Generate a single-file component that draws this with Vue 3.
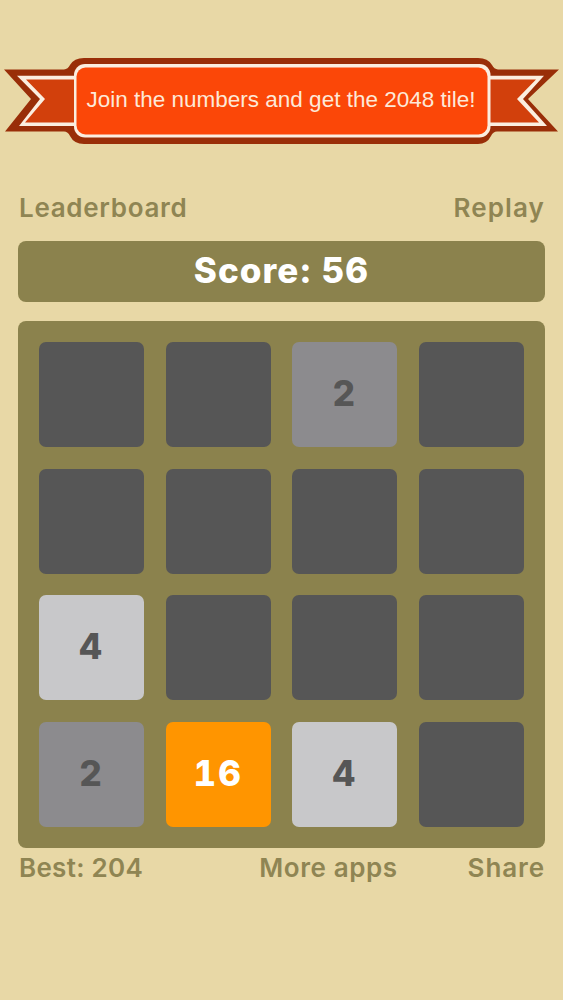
<script setup>
const rows = [
  [0, 0, 2, 0],
  [0, 0, 0, 0],
  [4, 0, 0, 0],
  [2, 16, 4, 0],
]
const tiles = rows.flat()
</script>

<template>
  <div class="page">
    <div class="banner">
      <svg class="ribbon" viewBox="0 0 563 86" width="563" height="86" aria-hidden="true">
        <g transform="translate(0 -58)">
          <path d="M4 69.500H64Q68 69 70 65Q74 58 84 58H478Q488 58 492 65Q494 69 498 69.500H559L528 99L558 131.500H497Q493 131.500 491 136Q487 144 478 144H84Q74 144 70 136Q68 131.500 64 131.500H5L31 99Z" fill="#992e08"/>
          <path d="M17 75.700H80V126H19L40 99Z" fill="#fbeee0"/>
          <path d="M544 75.700H480V126H547L523 99Z" fill="#fbeee0"/>
          <path d="M26 79.500H80V122.500H25L45 99Z" fill="#d2400c"/>
          <path d="M536 79.500H480V122.500H539L517 99Z" fill="#d2400c"/>
          <rect x="74" y="64" width="416.500" height="73.500" rx="11" fill="#fbeee0"/>
          <rect x="76.500" y="67.500" width="411" height="67" rx="9" fill="#fb4708"/>
        </g>
      </svg>
      <span class="slogan">Join the numbers and get the 2048 tile!</span>
    </div>

    <div class="links top">
      <span>Leaderboard</span>
      <span class="replay">Replay</span>
    </div>

    <div class="score">Score: 56</div>

    <div class="board">
      <div
        v-for="(value, index) in tiles"
        :key="index"
        class="tile"
        :class="'t' + value"
      >{{ value || '' }}</div>
    </div>

    <div class="links bottom">
      <span class="best">Best: 204</span>
      <span class="more">More apps</span>
      <span class="share">Share</span>
    </div>
  </div>
</template>

<style>
html, body { margin: 0; background: #e8d8a6; }
</style>

<style scoped>
.page {
  width: 563px;
  height: 1000px;
  box-sizing: border-box;
  padding-top: 58px;
  background: #e8d8a6;
  font-family: Inter, "Open Sans", sans-serif;
  overflow: hidden;
}
.banner {
  position: relative;
  height: 86px;
  display: flex;
  align-items: center;
  justify-content: center;
}
.ribbon {
  position: absolute;
  left: 0;
  top: 0;
}
.slogan {
  position: relative;
  font-family: "Liberation Sans", Arial, sans-serif;
  font-size: 22.500px;
  color: #fde9d8;
  margin-left: -1px;
  margin-top: -3px;
  white-space: nowrap;
}
.links {
  display: flex;
  justify-content: space-between;
  color: #8f8553;
  font-weight: 600;
  font-size: 26px;
  letter-spacing: 0.7px;
  line-height: 32px;
  margin: 0 18px 0 19px;
}
.top { margin-top: 48px; }
.replay { letter-spacing: 1.100px; }
.bottom {
  margin-top: 4px;
  justify-content: flex-start;
}
.best { letter-spacing: 0.300px; }
.more { margin-left: 116px; letter-spacing: 0.600px; }
.share { margin-left: auto; letter-spacing: 0.900px; }
.score {
  margin: 17px 18px 0;
  height: 61px;
  border-radius: 8px;
  background: #8b824d;
  color: #fff;
  font-weight: 800;
  font-size: 35px;
  letter-spacing: 1px;
  display: flex;
  align-items: center;
  justify-content: center;
  padding-bottom: 3px;
  box-sizing: border-box;
}
.board {
  margin: 19px 18px 0;
  padding: 21px;
  box-sizing: border-box;
  height: 527px;
  border-radius: 8px;
  background: #8b824d;
  display: grid;
  grid-template-columns: repeat(4, 1fr);
  grid-template-rows: repeat(4, 1fr);
  gap: 21.670px;
}
.tile {
  border-radius: 7px;
  background: #565656;
  display: flex;
  align-items: center;
  justify-content: center;
  font-weight: 800;
  font-size: 35px;
  letter-spacing: 2px;
  font-variant-numeric: tabular-nums;
  color: #565656;
  padding-bottom: 3px;
  box-sizing: border-box;
}
.t2 { background: #8c8b8e; }
.t4 { background: #c8c8ca; }
.t16 { background: #ff9500; color: #fff; }
</style>
